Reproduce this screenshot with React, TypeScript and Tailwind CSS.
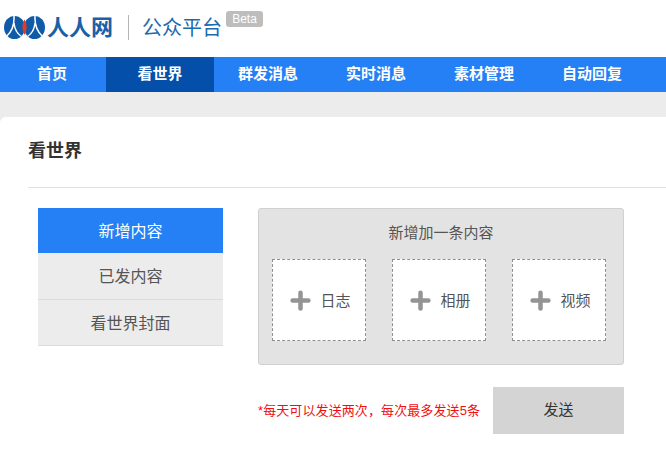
import { Plus } from "lucide-react"

const cjk = { fontFamily: '"Liberation Sans", "Noto Sans CJK SC", sans-serif' }

const navItems = ["首页", "看世界", "群发消息", "实时消息", "素材管理", "自动回复"]
const sideItems = ["新增内容", "已发内容", "看世界封面"]
const addItems = ["日志", "相册", "视频"]

function Logo() {
  return (
    <svg width="41" height="23" viewBox="0 0 41 23" className="shrink-0">
      <ellipse cx="10.500" cy="11.500" rx="10.500" ry="11.500" fill="#0f5ba8" />
      <ellipse cx="30.500" cy="11.500" rx="10.500" ry="11.500" fill="#0f5ba8" />
      <path d="M15.500 0 C19 3 20 5 20.500 6 C21 5 22 3 25.500 0 Z" fill="#fff" />
      <path d="M15.500 23 C19 20 20 18 20.500 16 C21 18 22 20 25.500 23 Z" fill="#fff" />
      <path d="M20.500 3.500 C23 7 23.500 14 20.500 19 C17.500 14 18 7 20.500 3.500 Z" fill="#e23c26" />
      <path d="M10 0 C10.500 9 7.500 16 2.500 20.500 M10 7 C10.500 13 13 17.500 17.500 20.500" stroke="#fff" strokeWidth="1.500" fill="none" />
      <path d="M31 0 C30.500 9 33.500 16 38.500 20.500 M31 7 C30.500 13 28 17.500 23.500 20.500" stroke="#fff" strokeWidth="1.500" fill="none" />
    </svg>
  )
}

export default function App() {
  return (
    <div className="h-[460px] w-[666px] overflow-hidden bg-white" style={cjk}>
      {/* Header */}
      <header className="flex h-[57px] items-start">
        <div className="ml-1 mt-[16px] flex h-[23px] items-center">
          <Logo />
          <span className="ml-[2px] text-[22px] leading-6 font-bold text-[#1a5fa8]">人人网</span>
        </div>
        <div className="ml-[15px] mt-[15px] h-[25px] w-px bg-[#b5b5b5]" />
        <span className="ml-[13px] mt-[16px] text-[20px] leading-6 text-[#1c69ae]">公众平台</span>
        <span className="ml-1 mt-[11px] flex h-4 w-[37px] items-center justify-center rounded-[3px] bg-[#bdbdbd] text-xs text-white">
          Beta
        </span>
      </header>

      {/* Nav */}
      <nav className="flex h-[35px] bg-[#2480f4]">
        {navItems.map((item, i) => (
          <div
            key={item}
            className={`flex h-full items-center justify-center text-[15px] font-bold text-white ${
              i === 0 ? "w-[106px] pr-0.5" : "w-[108px]"
            } ${i === 1 ? "bg-[#034faa]" : ""}`}
          >
            {item}
          </div>
        ))}
      </nav>

      <div className="bg-[#ececec] pt-[25px]">
        {/* Content */}
        <main className="h-[343px] rounded-tl-[6px] bg-white pl-[28px]">
          <h1 className="flex h-[71px] items-center border-b border-[#e2e2e2] pb-0.5 text-lg leading-none font-bold text-[#333]">
            看世界
          </h1>

          <div className="ml-[10px] mt-5 flex">
            <ul className="w-[185px]">
              {sideItems.map((item, i) => (
                <li
                  key={item}
                  className={`flex items-center justify-center pt-0.5 text-base ${
                    i === 0
                      ? "h-[45px] bg-[#2480f4] text-white"
                      : `border-b border-[#dcdcdc] bg-[#ececec] text-[#555] ${i === 1 ? "h-[47px]" : "h-[46px]"}`
                  }`}
                >
                  {item}
                </li>
              ))}
            </ul>

            <div className="ml-[35px] w-[366px]">
              <section className="h-[157px] rounded-[3px] border border-[#d0d0d0] bg-[#e3e3e3] px-[13px]">
                <p className="mt-[14px] h-5 text-center text-[15px] leading-5 text-[#555]">新增加一条内容</p>
                <div className="mt-4 flex gap-[26px]">
                  {addItems.map((item) => (
                    <div
                      key={item}
                      className="flex h-[82px] w-[94px] items-center justify-center gap-[6px] border border-dashed border-[#8f8f8f] bg-white"
                    >
                      <Plus size={27} strokeWidth={4} className="text-[#949494]" />
                      <span className="mt-[2px] text-[15px] text-[#555]">{item}</span>
                    </div>
                  ))}
                </div>
              </section>

              <div className="mt-[22px] flex items-center justify-between">
                <span className="text-[13px] tracking-[0.1px] text-[#f01010]">*每天可以发送两次，每次最多发送5条</span>
                <button className="h-[47px] w-[131px] bg-[#d4d4d4] text-[15px] text-[#333]">发送</button>
              </div>
            </div>
          </div>
        </main>
      </div>
    </div>
  )
}
